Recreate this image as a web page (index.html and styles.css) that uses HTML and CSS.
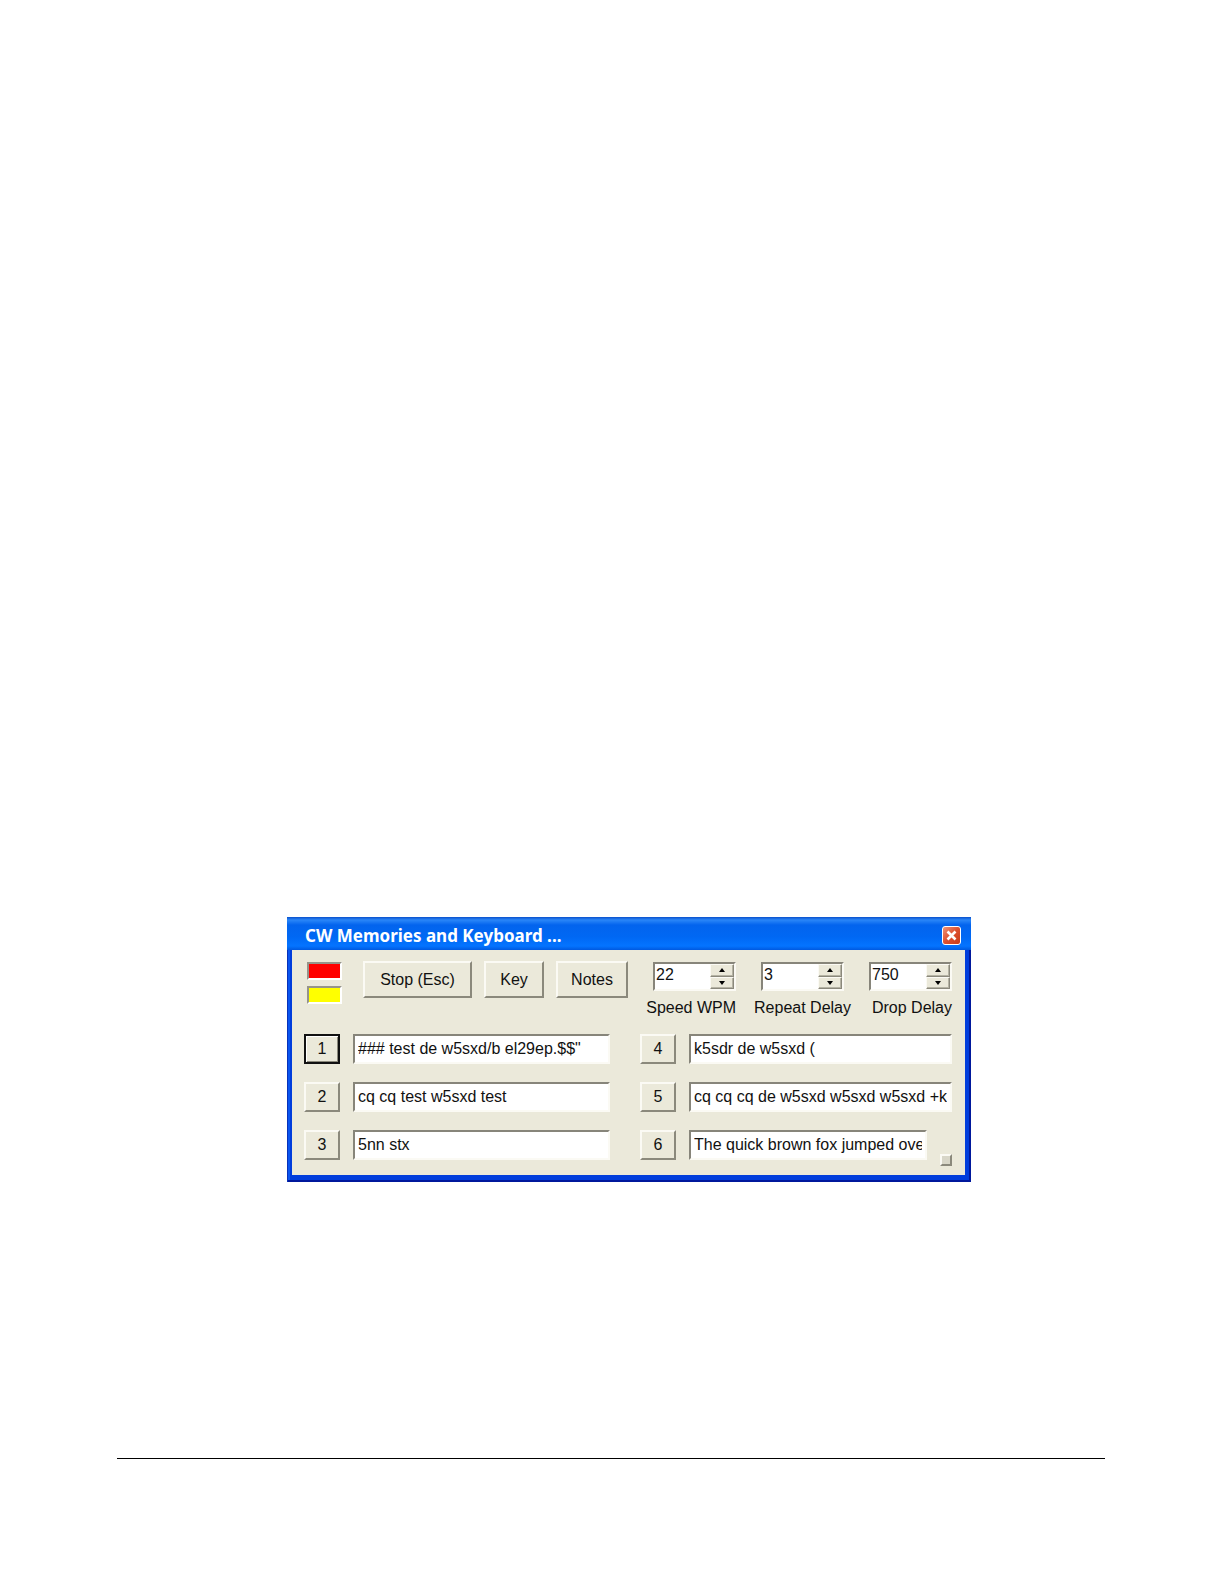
FILE: index.html
```
<!DOCTYPE html>
<html lang="en">
<head>
<meta charset="utf-8">
<title>CW Memories and Keyboard</title>
<link rel="stylesheet" href="styles.css">
</head>
<body>
<main class="page">
  <section class="window" aria-labelledby="window-title">
    <header class="titlebar">
      <h1 class="title" id="window-title">CW Memories and Keyboard ...</h1>
      <button class="close" type="button" aria-label="Close">
        <svg width="11" height="11" viewBox="0 0 11 11" aria-hidden="true"><path d="M1.5 1.5 9.5 9.5M9.5 1.5 1.5 9.5" stroke="#fff" stroke-width="2.6" fill="none"/></svg>
      </button>
    </header>
    <form class="content">
      <div class="toolbar">
        <div class="lamps">
          <span class="lamp lamp-red"></span>
          <span class="lamp lamp-yellow"></span>
        </div>
        <div class="actions">
          <button class="button stop" type="button">Stop (Esc)</button>
          <button class="button key" type="button">Key</button>
          <button class="button notes" type="button">Notes</button>
        </div>
        <div class="settings">
          <div class="setting">
            <div class="spinner">
              <input class="number" id="speed" type="text" inputmode="numeric" value="22">
              <span class="arrows">
                <button class="arrow" type="button" aria-label="Increase speed"><svg width="6" height="4" viewBox="0 0 6 4"><path d="M0 4 3 0 6 4Z"/></svg></button>
                <button class="arrow" type="button" aria-label="Decrease speed"><svg width="6" height="4" viewBox="0 0 6 4"><path d="M0 0 3 4 6 0Z"/></svg></button>
              </span>
            </div>
            <label for="speed">Speed WPM</label>
          </div>
          <div class="setting setting-centered">
            <div class="spinner">
              <input class="number" id="repeat" type="text" inputmode="numeric" value="3">
              <span class="arrows">
                <button class="arrow" type="button" aria-label="Increase repeat delay"><svg width="6" height="4" viewBox="0 0 6 4"><path d="M0 4 3 0 6 4Z"/></svg></button>
                <button class="arrow" type="button" aria-label="Decrease repeat delay"><svg width="6" height="4" viewBox="0 0 6 4"><path d="M0 0 3 4 6 0Z"/></svg></button>
              </span>
            </div>
            <label for="repeat">Repeat Delay</label>
          </div>
          <div class="setting">
            <div class="spinner">
              <input class="number" id="drop" type="text" inputmode="numeric" value="750">
              <span class="arrows">
                <button class="arrow" type="button" aria-label="Increase drop delay"><svg width="6" height="4" viewBox="0 0 6 4"><path d="M0 4 3 0 6 4Z"/></svg></button>
                <button class="arrow" type="button" aria-label="Decrease drop delay"><svg width="6" height="4" viewBox="0 0 6 4"><path d="M0 0 3 4 6 0Z"/></svg></button>
              </span>
            </div>
            <label for="drop">Drop Delay</label>
          </div>
        </div>
      </div>
      <div class="memories">
        <div class="column">
          <div class="memory">
            <button class="button slot slot-default" type="button">1</button>
            <input class="text" type="text" aria-label="Memory 1" value="### test de w5sxd/b el29ep.$$&quot;">
          </div>
          <div class="memory">
            <button class="button slot" type="button">2</button>
            <input class="text" type="text" aria-label="Memory 2" value="cq cq test w5sxd test">
          </div>
          <div class="memory">
            <button class="button slot" type="button">3</button>
            <input class="text" type="text" aria-label="Memory 3" value="5nn stx">
          </div>
        </div>
        <div class="column">
          <div class="memory">
            <button class="button slot" type="button">4</button>
            <input class="text" type="text" aria-label="Memory 4" value="k5sdr de w5sxd (">
          </div>
          <div class="memory">
            <button class="button slot" type="button">5</button>
            <input class="text" type="text" aria-label="Memory 5" value="cq cq cq de w5sxd w5sxd w5sxd +k">
          </div>
          <div class="memory">
            <button class="button slot" type="button">6</button>
            <input class="text" type="text" aria-label="Memory 6" value="The quick brown fox jumped over">
            <button class="mini" type="button" aria-label="More"></button>
          </div>
        </div>
      </div>
    </form>
  </section>
  <hr class="rule">
</main>
</body>
</html>
```
FILE: styles.css
```
* {
  box-sizing: border-box;
}

body {
  margin: 0;
  background: #fff;
  color: #111;
  font: 16px/20px "Liberation Sans", Arial, sans-serif;
}

button,
input {
  margin: 0;
  padding: 0;
  border-radius: 0;
  color: inherit;
  font: inherit;
}

.page {
  padding: 917px 119px 125px 117px;
}

.window {
  margin: 0 134px 0 170px;
  padding: 0 6px 7px 5px;
  background: #003ddc;
  box-shadow: inset 1px 0 #0831b8, inset -2px -2px #00189c, inset 3px 0 #0a55f0;
}

.titlebar {
  display: flex;
  align-items: center;
  justify-content: space-between;
  height: 33px;
  margin: 0 -6px 0 -5px;
  padding: 4px 10px 0 18px;
  background: linear-gradient(#0a50cc 0, #2a86f8 3px, #0364ee 8px, #0068f4 20px, #0474ff 29px, #0059e0 33px);
}

.title {
  margin: 0;
  color: #fff;
  font: bold 17px/24px "Noto Sans", sans-serif;
  white-space: nowrap;
}

.close {
  display: grid;
  place-items: center;
  width: 19px;
  height: 19px;
  border: 1px solid #fff;
  border-radius: 3px;
  background: linear-gradient(135deg, #ee9478, #dc5030 50%, #c83c18);
}

.content {
  padding: 11px 13px 15px 12px;
  background: #ebe9da;
}

.toolbar {
  display: flex;
  align-items: flex-start;
  height: 73px;
}

.lamps {
  display: grid;
  gap: 6px;
  margin: 1px 21px 0 3px;
}

.lamp {
  width: 35px;
  height: 18px;
  border: 2px solid;
  border-color: #96948a #fff #fff #96948a;
}

.lamp-red {
  background: #f00;
}

.lamp-yellow {
  background: #ff0;
}

.actions {
  display: flex;
  gap: 12px;
}

.button {
  height: 37px;
  border: 2px solid;
  border-color: #fbfaf4 #8b897c #8b897c #fbfaf4;
  background: #ebe9da;
  white-space: nowrap;
}

.stop {
  width: 109px;
}

.key {
  width: 60px;
}

.notes {
  width: 72px;
}

.settings {
  display: flex;
  gap: 18px;
  margin: 1px 0 0 auto;
  white-space: nowrap;
}

.setting {
  display: flex;
  flex-direction: column;
  align-items: flex-end;
  gap: 7px;
}

.setting-centered {
  align-items: center;
}

.spinner,
.text {
  border: 2px solid;
  border-color: #87857a #fbfaf4 #fbfaf4 #87857a;
  background: #fff;
}

.spinner {
  display: flex;
  width: 83px;
  height: 29px;
}

.number {
  flex: 1;
  min-width: 0;
  height: 22px;
  padding-left: 1px;
  border: 0;
  background: transparent;
}

.arrows {
  display: grid;
  width: 24px;
  grid-template-rows: 1fr 1fr;
}

.arrow {
  display: grid;
  place-items: center;
  border: 1px solid;
  border-color: #fbfaf4 #8b897c #8b897c #fbfaf4;
  box-shadow: inset -1px -1px #b5b3a4;
  background: #ebe9da;
}

.memories {
  display: grid;
  grid-template-columns: 306fr 312fr;
  gap: 30px;
}

.column {
  display: grid;
  gap: 18px;
  min-width: 0;
}

.memory {
  display: flex;
  gap: 13px;
}

.slot {
  flex: none;
  width: 36px;
  height: 30px;
}

.slot-default {
  border-color: #111;
  box-shadow: inset 1px 1px #fff, inset -1px -1px #8b897c;
}

.text {
  flex: 1;
  min-width: 0;
  height: 30px;
  padding: 0 3px;
}

.mini {
  align-self: flex-end;
  width: 12px;
  height: 12px;
  margin-bottom: -6px;
  border: 2px solid;
  border-color: #fbfaf4 #8b897c #8b897c #fbfaf4;
  background: #d8d6c8;
}

.rule {
  height: 1px;
  margin: 276px 0 0;
  border: 0;
  background: #000;
}
```
